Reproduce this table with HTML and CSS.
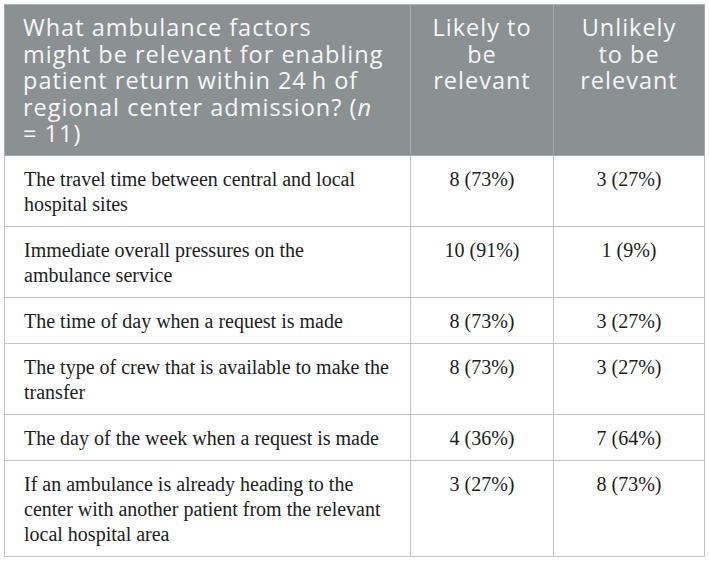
FILE: index.html
```html
<!DOCTYPE html>
<html>
<head>
<meta charset="utf-8">
<link rel="stylesheet" href="styles.css">
</head>
<body>
<table class="data">
  <colgroup>
    <col class="c1"><col class="c2"><col class="c3">
  </colgroup>
  <thead>
    <tr>
      <th class="q">What ambulance factors<br>might be relevant for enabling<br>patient return within 24&#8201;h of<br>regional center admission? (<i>n</i><br>= 11)</th>
      <th class="n">Likely to<br>be<br>relevant</th>
      <th class="n">Unlikely<br>to be<br>relevant</th>
    </tr>
  </thead>
  <tbody>
    <tr><td>The travel time between central and local hospital sites</td><td class="v">8 (73%)</td><td class="v">3 (27%)</td></tr>
    <tr><td>Immediate overall pressures on the ambulance service</td><td class="v">10 (91%)</td><td class="v">1 (9%)</td></tr>
    <tr><td>The time of day when a request is made</td><td class="v">8 (73%)</td><td class="v">3 (27%)</td></tr>
    <tr><td>The type of crew that is available to make the transfer</td><td class="v">8 (73%)</td><td class="v">3 (27%)</td></tr>
    <tr><td>The day of the week when a request is made</td><td class="v">4 (36%)</td><td class="v">7 (64%)</td></tr>
    <tr><td>If an ambulance is already heading to the center with another patient from the relevant local hospital area</td><td class="v">3 (27%)</td><td class="v">8 (73%)</td></tr>
  </tbody>
</table>
</body>
</html>
```
FILE: styles.css
```css
html, body {
  margin: 0;
  padding: 0;
  background: #ffffff;
}
.data {
  margin: 4px 0 0 4px;
  width: 700px;
  border-collapse: collapse;
  table-layout: fixed;
  border: 1px solid #b4b4b4;
}
.c1 { width: 406px; }
.c2 { width: 143px; }
.c3 { width: 151px; }
.data th {
  background: #8b9093;
  color: #f7f7f7;
  font-family: "Open Sans", Lato, sans-serif;
  font-weight: 400;
  font-size: 23.5px;
  letter-spacing: 1px;
  line-height: 26.5px;
  text-align: left;
  vertical-align: top;
  padding: 9px 4px 8px 18px;
  border: 1px solid #a7abad;
  border-top-color: #b4b4b4;
  white-space: nowrap;
}
.data th i {
  letter-spacing: 0;
}
.data th.n {
  text-align: center;
  padding: 9px 4px 8px 4px;
}
.data td {
  font-family: "Liberation Serif", "Times New Roman", serif;
  font-size: 20px;
  line-height: 25px;
  color: #1c1c1c;
  vertical-align: top;
  padding: 11px 16px 9px 19px;
  border: 1px solid #c2c2c2;
}
.data td.v {
  text-align: center;
  padding-left: 8px;
  padding-right: 8px;
}
```
